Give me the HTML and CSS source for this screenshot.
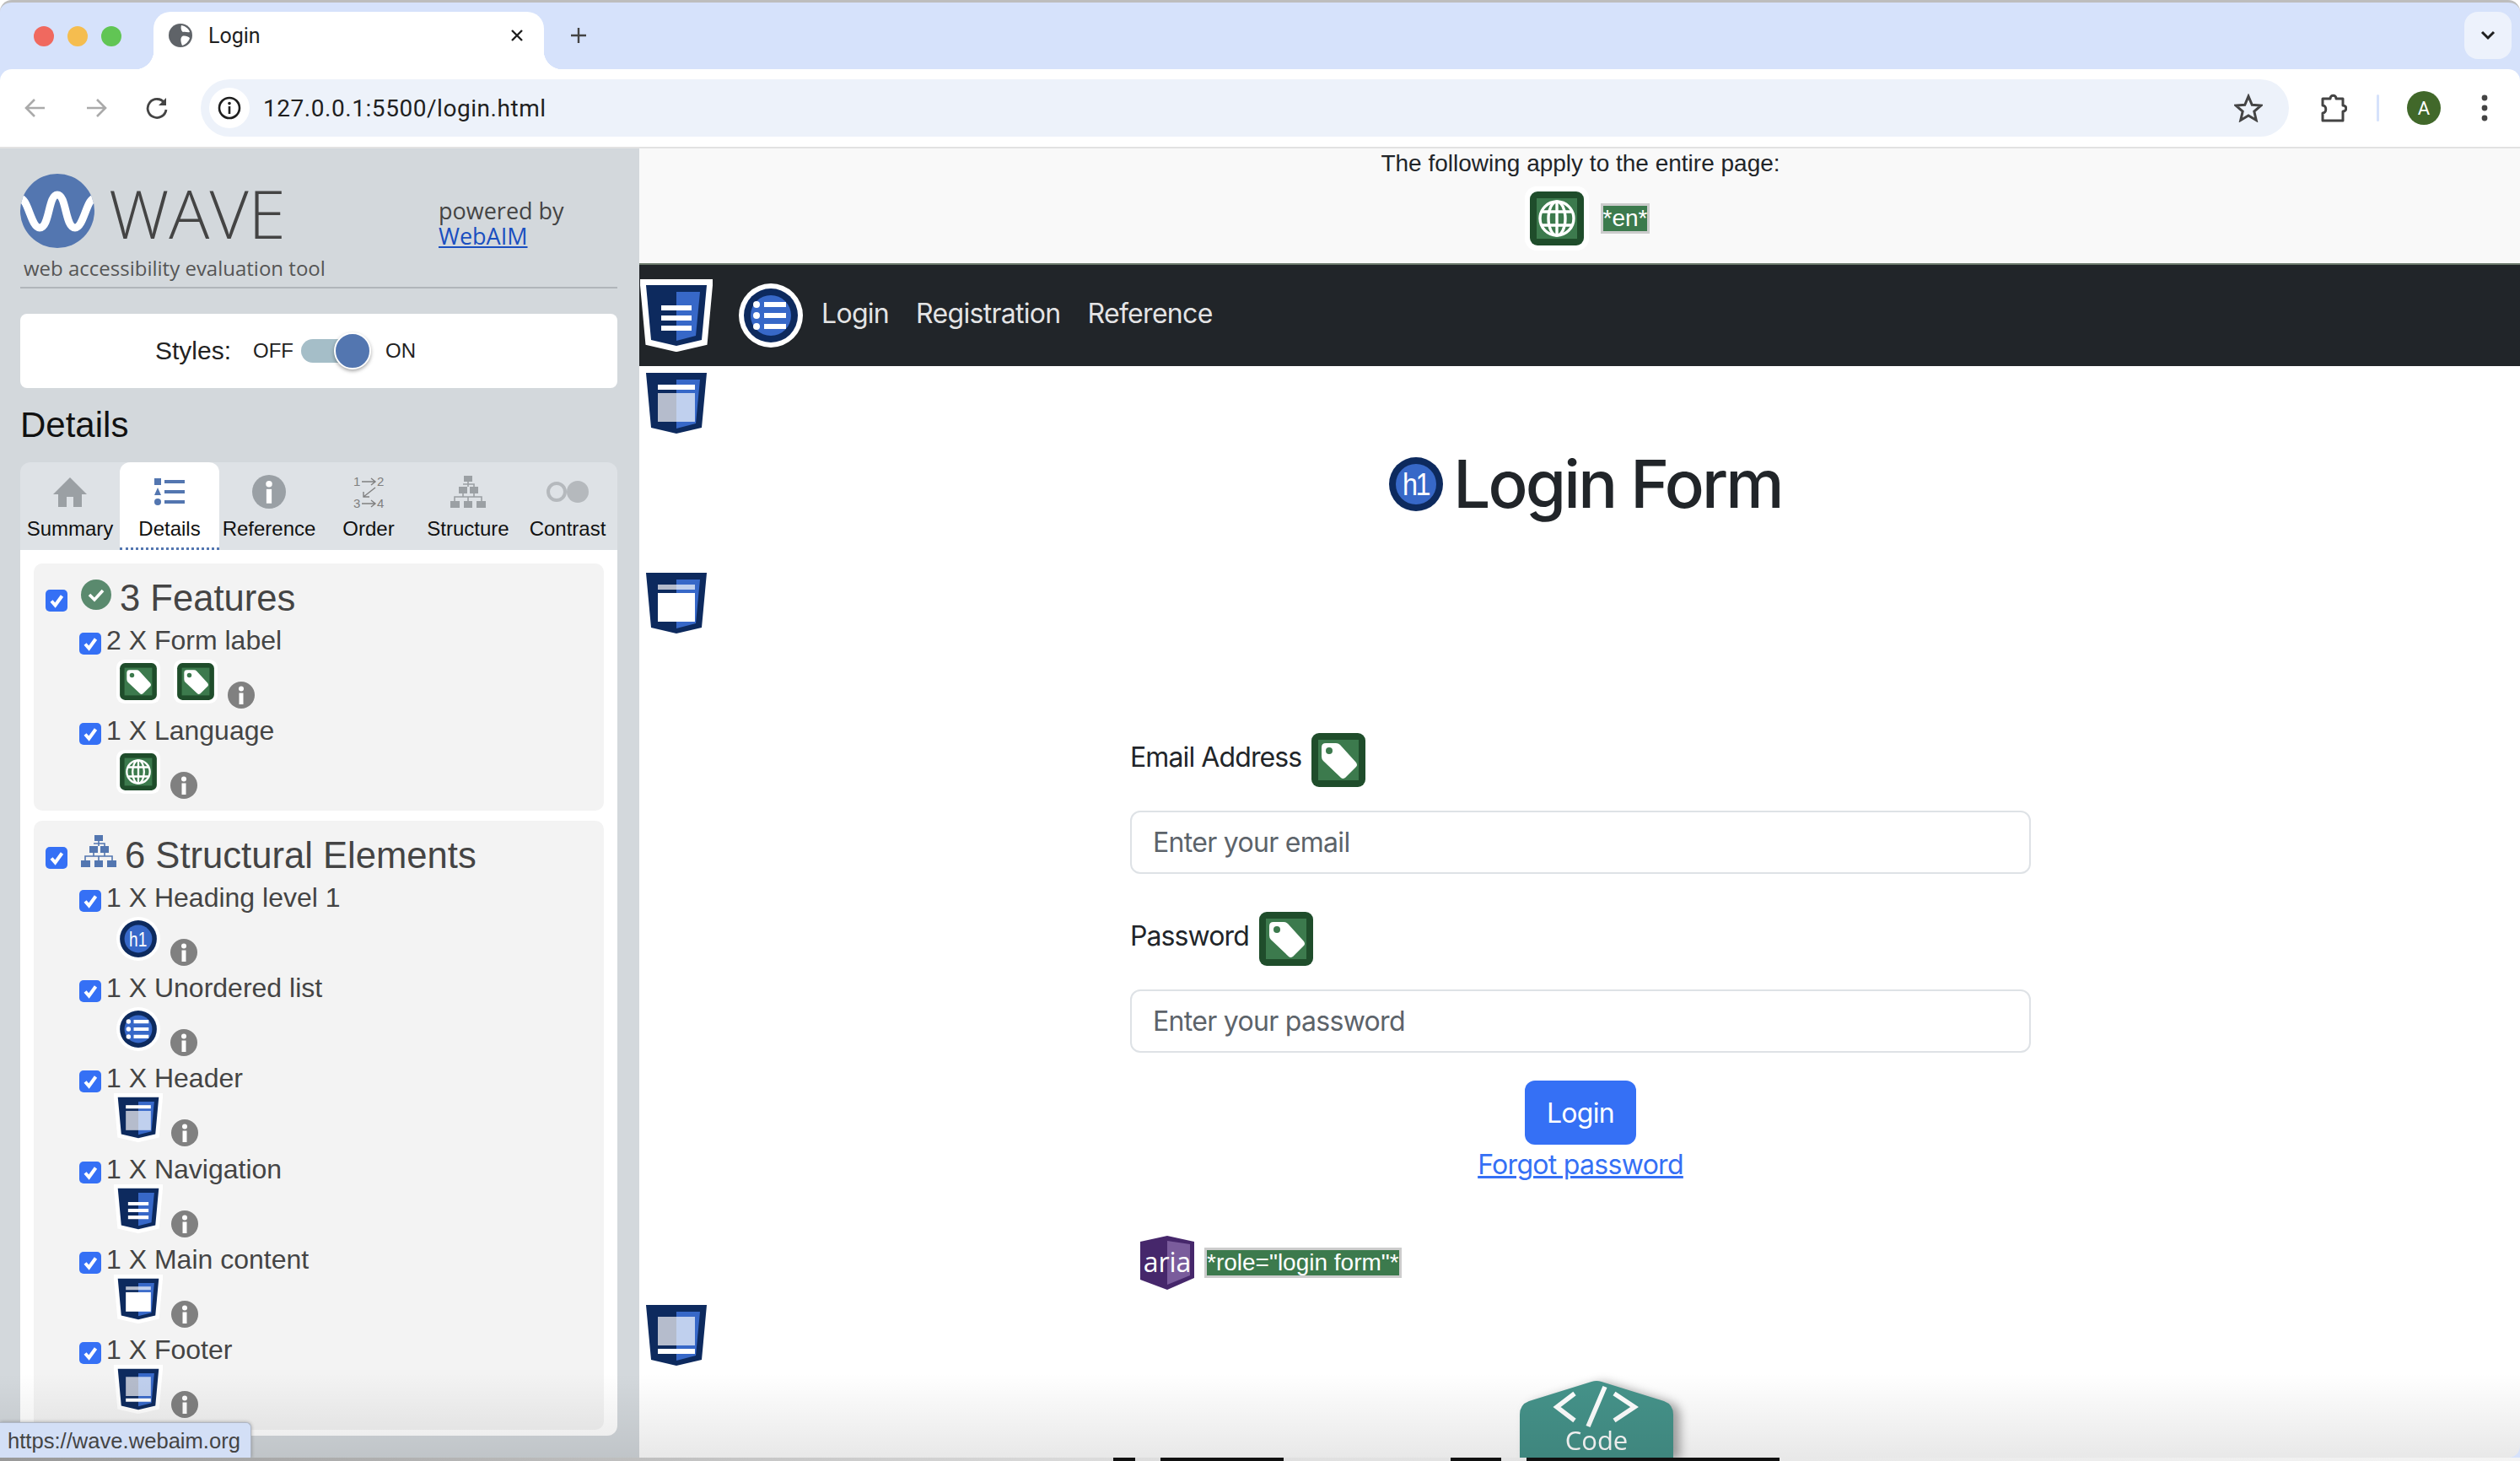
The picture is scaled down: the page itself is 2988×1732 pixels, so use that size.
FILE: index.html
```html
<!DOCTYPE html>
<html lang="en">
<head>
<meta charset="utf-8">
<title>Login</title>
<link rel="stylesheet" href="styles.css">
</head>
<body>
<svg class="defs" width="0" height="0" aria-hidden="true">
  <defs>
    <symbol id="shield-base" viewBox="-7 -7 86 86">
      <path d="M0 0H72L66 65L36 72L6 65Z" fill="#0d2a5e" stroke="#fff" stroke-width="14" paint-order="stroke"/>
      <path d="M36 8H64L59 60L36 66Z" fill="#3768c8"/>
    </symbol>
    <symbol id="s-nav" viewBox="-7 -7 86 86">
      <use href="#shield-base" x="-7" y="-7" width="86" height="86"/>
      <path d="M18 24h36v6H18zM18 36h36v6H18zM18 48h36v6H18z" fill="#fff"/>
    </symbol>
    <symbol id="s-header" viewBox="-7 -7 86 86">
      <use href="#shield-base" x="-7" y="-7" width="86" height="86"/>
      <path d="M14 14h44v6H14z" fill="#fff"/>
      <path d="M14 24h22v34H14z" fill="#b5bccc"/><path d="M36 24h22v34H36z" fill="#c0d0ee"/>
    </symbol>
    <symbol id="s-main" viewBox="-7 -7 86 86">
      <use href="#shield-base" x="-7" y="-7" width="86" height="86"/>
      <path d="M14 14h22v6H14z" fill="#b5bccc"/><path d="M36 14h22v6H36z" fill="#c0d0ee"/>
      <path d="M14 24h44v34H14z" fill="#fff"/>
    </symbol>
    <symbol id="s-footer" viewBox="-7 -7 86 86">
      <use href="#shield-base" x="-7" y="-7" width="86" height="86"/>
      <path d="M14 14h22v34H14z" fill="#b5bccc"/><path d="M36 14h22v34H36z" fill="#c0d0ee"/>
      <path d="M14 52h44v6H14z" fill="#fff"/>
    </symbol>
    <symbol id="i-tag" viewBox="-6 -6 76 76">
      <rect x="-6" y="-6" width="76" height="76" rx="14" fill="#fff"/>
      <rect width="64" height="64" rx="9" fill="#1f4d2b"/>
      <rect x="8" y="8" width="48" height="48" fill="#3c7a4d"/>
      <path d="M12 17q0-5 5-5H29q3 0 5 2L53 35q2 3 0 5L40 53q-3 2-5 0L14 33q-2-2-2-5Z" fill="#fff"/>
      <circle cx="21" cy="21" r="4" fill="#3c7a4d"/>
    </symbol>
    <symbol id="i-globe" viewBox="-6 -6 76 76">
      <rect x="-6" y="-6" width="76" height="76" rx="14" fill="#fff"/>
      <rect width="64" height="64" rx="9" fill="#1f4d2b"/>
      <rect x="8" y="8" width="48" height="48" fill="#3c7a4d"/>
      <g fill="none" stroke="#fff" stroke-width="3.4">
        <circle cx="32" cy="32" r="20"/>
        <ellipse cx="32" cy="32" rx="10" ry="20"/>
        <path d="M14 24H50M14 40H50M32 12V52"/>
      </g>
    </symbol>
    <symbol id="i-h1" viewBox="-6 -6 76 76">
      <circle cx="32" cy="32" r="38" fill="#fff"/>
      <circle cx="32" cy="32" r="32" fill="#0d2a5e"/>
      <circle cx="32" cy="32" r="24" fill="#3768c8"/>
      <text x="16" y="45" class="svg-h1" textLength="31" lengthAdjust="spacingAndGlyphs">h1</text>
    </symbol>
    <symbol id="i-ul" viewBox="-6 -6 76 76">
      <circle cx="32" cy="32" r="38" fill="#fff"/>
      <circle cx="32" cy="32" r="32" fill="#0d2a5e"/>
      <circle cx="32" cy="32" r="24" fill="#3768c8"/>
      <g fill="#fff">
        <circle cx="15" cy="19" r="4"/><circle cx="15" cy="32" r="4"/><circle cx="15" cy="45" r="4"/>
        <path d="M24 16H50V22H24zM24 29H50V35H24zM24 42H50V48H24z"/>
      </g>
    </symbol>
    <symbol id="i-info" viewBox="0 0 32 32">
      <circle cx="16" cy="16" r="16" fill="currentColor"/>
      <circle cx="16" cy="8.5" r="3" fill="#fff"/>
      <path d="M13.5 13.5H18.5V27H13.5Z" fill="#fff"/>
    </symbol>
    <symbol id="i-check" viewBox="0 0 26 26">
      <path d="M7 13.5L11.5 18.5L19.5 7.5" fill="none" stroke="#fff" stroke-width="4"/>
    </symbol>
    <symbol id="i-tree" viewBox="0 0 42 38">
      <path d="M16 0H26V7H16ZM10 13H20V21H10ZM23 13H33V21H23ZM0 30H11V38H0ZM16 30H26V38H16ZM31 30H42V38H31Z" fill="currentColor"/>
      <path d="M21 7V13M15 10H28V13M15 21V25H5V30M28 21V25H37V30M21 25V30M15 25H28" fill="none" stroke="currentColor" stroke-width="1.6"/>
    </symbol>
  </defs>
</svg>

<div class="window">
  <div class="tabstrip">
    <div class="lights">
      <span class="light light-red"></span>
      <span class="light light-yellow"></span>
      <span class="light light-green"></span>
    </div>
    <div class="tab">
      <svg class="tab-favicon" viewBox="0 0 28 28"><circle cx="14" cy="14" r="14" fill="#5f6368"/><path d="M15 2C20 3 24 6 25 10C22 11 20 9 17 10C15 9 14 5 15 2ZM16 15C19 14 23 15 25 17C24 21 20 25 16 26C15 23 13 18 16 15Z" fill="#fff"/></svg>
      <span class="tab-title">Login</span>
      <svg class="tab-close" viewBox="0 0 16 16"><path d="M2 2L14 14M14 2L2 14" stroke="#1f1f1f" stroke-width="2.4"/></svg>
    </div>
    <svg class="new-tab" viewBox="0 0 20 20"><path d="M10 1V19M1 10H19" stroke="#444" stroke-width="2.4"/></svg>
    <div class="tab-menu"><svg viewBox="0 0 18 12" class="tab-menu-icon"><path d="M2 2L9 9L16 2" fill="none" stroke="#1f1f1f" stroke-width="3"/></svg></div>
  </div>
  <div class="toolbar">
    <svg class="nav-btn" viewBox="0 0 28 28"><path d="M25 14H4M13 4L3 14L13 24" fill="none" stroke="#aaa" stroke-width="2.6"/></svg>
    <svg class="nav-btn" viewBox="0 0 28 28"><path d="M3 14H24M15 4L25 14L15 24" fill="none" stroke="#aaa" stroke-width="2.6"/></svg>
    <svg class="nav-btn" viewBox="0 0 28 28"><path d="M23 8A11 11 0 1 0 25 16" fill="none" stroke="#444" stroke-width="2.8"/><path d="M25 2V11H16Z" fill="#444"/></svg>
    <div class="omnibox">
      <span class="site-info"><svg class="site-info-icon" viewBox="0 0 28 28"><circle cx="14" cy="14" r="12" fill="none" stroke="#1f1f1f" stroke-width="2.6"/><circle cx="14" cy="8.6" r="1.8" fill="#1f1f1f"/><path d="M12.7 12H15.3V21H12.7Z" fill="#1f1f1f"/></svg></span>
      <span class="url">127.0.0.1:5500/login.html</span>
      <svg class="star" viewBox="0 0 32 32"><path d="M16 3L20 12.5L30 13.3L22.4 19.8L24.7 29.6L16 24.4L7.3 29.6L9.6 19.8L2 13.3L12 12.5Z" fill="none" stroke="#444" stroke-width="2.8"/></svg>
    </div>
    <svg class="ext" viewBox="0 0 32 36"><path d="M3 7H12C12 2 19 2 19 7H27V15C32 15 32 22 27 22V33H3V24C8 24 8 15 3 15Z" fill="none" stroke="#444" stroke-width="3" stroke-linejoin="round"/></svg>
    <span class="tool-divider"></span>
    <span class="avatar">A</span>
    <svg class="dots" viewBox="0 0 8 32"><circle cx="4" cy="4" r="3.4" fill="#444"/><circle cx="4" cy="16" r="3.4" fill="#444"/><circle cx="4" cy="28" r="3.4" fill="#444"/></svg>
  </div>

  <div class="content">
    <aside class="sidebar">
      <div class="brand">
        <div class="brand-top">
          <svg class="logo" viewBox="0 0 88 88"><defs><clipPath id="logo-clip"><circle cx="44" cy="44" r="44"/></clipPath></defs><circle cx="44" cy="44" r="44" fill="#5376b0"/><path clip-path="url(#logo-clip)" d="M-2 30C9 24 12 64 23 64C35 64 33 25 44 25C55 25 53 64 65 64C76 64 79 24 90 30" fill="none" stroke="#fff" stroke-width="9"/></svg>
          <span class="wave">WAVE</span>
          <div class="powered">powered by<br><a class="webaim" href="#">WebAIM</a></div>
        </div>
        <div class="tagline">web accessibility evaluation tool</div>
      </div>

      <div class="styles-card">
        <span class="styles-label">Styles:</span>
        <span class="styles-state">OFF</span>
        <span class="toggle"><span class="knob"></span></span>
        <span class="styles-state">ON</span>
      </div>

      <h2 class="details-title">Details</h2>

      <div class="tabs">
        <div class="wtab">
          <span class="wtab-icon"><svg class="ic-home" viewBox="0 0 40 35"><path d="M20 0L40 20H34V35H24V23H16V35H6V20H0Z" fill="#9ba0a4"/></svg></span>
          <span class="wtab-label">Summary</span>
        </div>
        <div class="wtab wtab-active">
          <span class="wtab-icon"><svg class="ic-details" viewBox="0 0 36 32"><path d="M0 0H8V8H0ZM4 11L8 20H0ZM12 2H36V6H12ZM12 14H36V18H12ZM12 26H36V30H12Z" fill="#5376b0"/><circle cx="4" cy="28" r="4" fill="#5376b0"/></svg></span>
          <span class="wtab-label">Details</span>
        </div>
        <div class="wtab">
          <span class="wtab-icon"><svg class="ic-ref"><use href="#i-info"/></svg></span>
          <span class="wtab-label">Reference</span>
        </div>
        <div class="wtab">
          <span class="wtab-icon"><svg class="ic-order" viewBox="0 0 37 40"><text x="0" y="13" class="svg-order">1</text><text x="28" y="13" class="svg-order">2</text><text x="0" y="39" class="svg-order">3</text><text x="28" y="39" class="svg-order">4</text><path d="M10 8H25M21 4L26 8L21 12M10 34H25M21 30L26 34L21 38M26 15L12 26M12 20V26H19" fill="none" stroke="#808080" stroke-width="1.4"/></svg></span>
          <span class="wtab-label">Order</span>
        </div>
        <div class="wtab">
          <span class="wtab-icon"><svg class="ic-tree"><use href="#i-tree"/></svg></span>
          <span class="wtab-label">Structure</span>
        </div>
        <div class="wtab">
          <span class="wtab-icon"><svg class="ic-contrast" viewBox="0 0 50 26"><circle cx="12" cy="13" r="10" fill="none" stroke="#b5b9bd" stroke-width="4"/><circle cx="37" cy="13" r="13" fill="#b5b9bd"/></svg></span>
          <span class="wtab-label">Contrast</span>
        </div>
      </div>

      <div class="panel">
        <section class="group group-features">
          <div class="group-head">
            <span class="cb"><svg class="cb-check"><use href="#i-check"/></svg></span>
            <svg class="group-icon" viewBox="0 0 36 36"><circle cx="18" cy="18" r="18" fill="#5a8a6e"/><path d="M10 18L16 24L26 13" fill="none" stroke="#fff" stroke-width="3.6"/></svg>
            <h3 class="group-title">3 Features</h3>
          </div>
          <div class="row">
            <div class="row-head"><span class="cb"><svg class="cb-check"><use href="#i-check"/></svg></span><span class="row-label">2 X Form label</span></div>
            <div class="row-icons"><svg class="ic"><use href="#i-tag"/></svg><svg class="ic"><use href="#i-tag"/></svg><svg class="ic-more"><use href="#i-info"/></svg></div>
          </div>
          <div class="row">
            <div class="row-head"><span class="cb"><svg class="cb-check"><use href="#i-check"/></svg></span><span class="row-label">1 X Language</span></div>
            <div class="row-icons"><svg class="ic"><use href="#i-globe"/></svg><svg class="ic-more"><use href="#i-info"/></svg></div>
          </div>
        </section>

        <section class="group">
          <div class="group-head">
            <span class="cb"><svg class="cb-check"><use href="#i-check"/></svg></span>
            <svg class="group-tree"><use href="#i-tree"/></svg>
            <h3 class="group-title">6 Structural Elements</h3>
          </div>
          <div class="row">
            <div class="row-head"><span class="cb"><svg class="cb-check"><use href="#i-check"/></svg></span><span class="row-label">1 X Heading level 1</span></div>
            <div class="row-icons"><svg class="ic"><use href="#i-h1"/></svg><svg class="ic-more"><use href="#i-info"/></svg></div>
          </div>
          <div class="row">
            <div class="row-head"><span class="cb"><svg class="cb-check"><use href="#i-check"/></svg></span><span class="row-label">1 X Unordered list</span></div>
            <div class="row-icons"><svg class="ic"><use href="#i-ul"/></svg><svg class="ic-more"><use href="#i-info"/></svg></div>
          </div>
          <div class="row">
            <div class="row-head"><span class="cb"><svg class="cb-check"><use href="#i-check"/></svg></span><span class="row-label">1 X Header</span></div>
            <div class="row-icons"><svg class="ic-shield"><use href="#s-header"/></svg><svg class="ic-more"><use href="#i-info"/></svg></div>
          </div>
          <div class="row">
            <div class="row-head"><span class="cb"><svg class="cb-check"><use href="#i-check"/></svg></span><span class="row-label">1 X Navigation</span></div>
            <div class="row-icons"><svg class="ic-shield"><use href="#s-nav"/></svg><svg class="ic-more"><use href="#i-info"/></svg></div>
          </div>
          <div class="row">
            <div class="row-head"><span class="cb"><svg class="cb-check"><use href="#i-check"/></svg></span><span class="row-label">1 X Main content</span></div>
            <div class="row-icons"><svg class="ic-shield"><use href="#s-main"/></svg><svg class="ic-more"><use href="#i-info"/></svg></div>
          </div>
          <div class="row">
            <div class="row-head"><span class="cb"><svg class="cb-check"><use href="#i-check"/></svg></span><span class="row-label">1 X Footer</span></div>
            <div class="row-icons"><svg class="ic-shield"><use href="#s-footer"/></svg><svg class="ic-more"><use href="#i-info"/></svg></div>
          </div>
        </section>
      </div>
    </aside>

    <main class="page">
      <div class="page-info">
        <p class="page-info-text">The following apply to the entire page:</p>
        <div class="page-info-icons">
          <svg class="big-ic"><use href="#i-globe"/></svg>
          <span class="code-label">*en*</span>
        </div>
      </div>
      <nav class="navbar">
        <svg class="big-shield"><use href="#s-nav"/></svg>
        <svg class="big-ic navbar-ul"><use href="#i-ul"/></svg>
        <a class="nav-link" href="#">Login</a>
        <a class="nav-link" href="#">Registration</a>
        <a class="nav-link" href="#">Reference</a>
      </nav>

      <svg class="big-shield float-shield float-header"><use href="#s-header"/></svg>
      <svg class="big-shield float-shield float-main"><use href="#s-main"/></svg>
      <svg class="big-shield float-shield float-footer"><use href="#s-footer"/></svg>

      <h1 class="hero"><svg class="big-ic"><use href="#i-h1"/></svg><span>Login Form</span></h1>

      <form class="form">
        <div class="form-label"><label for="email">Email Address</label><svg class="big-ic"><use href="#i-tag"/></svg></div>
        <input class="form-input" id="email" type="email" placeholder="Enter your email">
        <div class="form-label form-label-2"><label for="password">Password</label><svg class="big-ic"><use href="#i-tag"/></svg></div>
        <input class="form-input" id="password" type="password" placeholder="Enter your password">
        <div class="form-actions">
          <button class="login-btn" type="button">Login</button>
          <a class="forgot" href="#">Forgot password</a>
        </div>
        <div class="aria-row">
          <svg class="aria-ic" viewBox="0 0 64 64"><path d="M0 7L32 0L64 7V50L32 64L0 52Z" fill="#46276b"/><path d="M32 6L59 10V47L32 58Z" fill="#7a5c9c"/><text x="32" y="43" class="svg-aria">aria</text></svg>
          <span class="code-label">*role="login form"*</span>
        </div>
      </form>

      <svg class="code-tab" viewBox="0 0 182 91"><path d="M0 91V40Q0 28 11 24L85 1Q91-1 97 1L171 24Q182 28 182 40V91Z" fill="#45938a"/><path d="M65 15L44 31L65 47M112 15L136 31L112 47M101 7L81 54" fill="none" stroke="#fff" stroke-width="5.5"/><text x="91" y="82" class="svg-code">Code</text></svg>
    </main>

    <div class="bottom-fade"></div>
    <div class="status">https://wave.webaim.org</div>
  </div>

  <div class="under-strip">
    <span class="scrap scrap-a"></span><span class="scrap scrap-b"></span><span class="scrap scrap-c"></span><span class="scrap scrap-d"></span>
  </div>
</div>
</body>
</html>
```

FILE: styles.css
```css
* { box-sizing: border-box; }
html, body { margin: 0; padding: 0; background: #fff; }
.defs { position: absolute; }
.svg-h1 { font: 36px "Liberation Sans", sans-serif; fill: #fff; }
.svg-order { font: 15px "Liberation Sans", sans-serif; fill: #808080; }
.svg-aria { font: 32px "Open Sans", sans-serif; fill: #fff; text-anchor: middle; }
.svg-code { font: 31px "Open Sans", sans-serif; fill: #fff; text-anchor: middle; }

.window { width: 2988px; height: 1732px; overflow: hidden; display: flex; flex-direction: column; background: #d6e2fb; border-radius: 14px 14px 0 0; border-top: 3px solid #bdbdbd; }

/* browser chrome */
.tabstrip { height: 79px; flex: none; display: flex; align-items: center; padding-left: 40px; font-family: Roboto, sans-serif; }
.lights { display: flex; gap: 16px; }
.light { width: 24px; height: 24px; border-radius: 50%; }
.light-red { background: #f0695f; }
.light-yellow { background: #f5bd4f; }
.light-green { background: #61c554; }
.tab { position: relative; align-self: flex-end; margin-left: 38px; width: 463px; height: 68px; background: #fff; border-radius: 20px 20px 0 0; display: flex; align-items: center; padding: 0 24px 12px 18px; }
.tab::before, .tab::after { content: ""; position: absolute; bottom: 0; width: 22px; height: 22px; }
.tab::before { left: -22px; background: radial-gradient(circle at 0 0, transparent 22px, #fff 22.5px); }
.tab::after { right: -22px; background: radial-gradient(circle at 100% 0, transparent 22px, #fff 22.5px); }
.tab-favicon { width: 28px; height: 28px; }
.tab-title { margin-left: 19px; font-size: 25px; color: #1f1f1f; }
.tab-close { width: 16px; height: 16px; margin-left: auto; }
.new-tab { width: 20px; height: 20px; margin-left: 31px; margin-top: -2px; }
.tab-menu { margin-left: auto; margin-right: 10px; width: 56px; height: 56px; margin-top: -2px; border-radius: 16px; background: #edf2fc; display: flex; align-items: center; justify-content: center; }
.tab-menu-icon { width: 18px; height: 12px; }

.toolbar { height: 92px; flex: none; background: #fff; border-radius: 14px 14px 0 0; display: flex; align-items: center; padding: 0 38px 0 28px; }
.nav-btn { width: 28px; height: 28px; margin-right: 44px; }
.omnibox { flex: 1; height: 68px; margin-left: -6px; background: #edf2fa; border-radius: 34px; display: flex; align-items: center; padding: 0 31px 0 10px; }
.site-info { width: 48px; height: 48px; border-radius: 50%; background: #fff; display: flex; align-items: center; justify-content: center; }
.site-info-icon { width: 28px; height: 28px; }
.url { margin-left: 16px; font: 28px Roboto, sans-serif; letter-spacing: .55px; color: #1f1f1f; }
.star { width: 34px; height: 34px; margin-left: auto; }
.ext { width: 32px; height: 36px; margin-left: 37px; margin-right: -2px; }
.tool-divider { width: 3px; height: 32px; margin-left: 37px; background: #d6e2fb; border-radius: 2px; }
.avatar { width: 40px; height: 40px; margin-left: 33px; border-radius: 50%; background: #41682a; color: #fff; font: 22px Roboto, sans-serif; display: flex; align-items: center; justify-content: center; }
.dots { width: 8px; height: 32px; margin-left: 48px; }

.content { position: relative; flex: 1; min-height: 0; display: flex; border-top: 2px solid #e2e2e2; background: #fff; overflow: hidden; border-radius: 0 0 14px 0; }

/* WAVE sidebar */
.sidebar { width: 758px; flex: none; background: #d3d8dc; padding: 0 26px 0 24px; font-family: "Liberation Sans", sans-serif; }
.brand { height: 166px; border-bottom: 2px solid #b0b5ba; font-family: "Open Sans", sans-serif; }
.brand-top { display: flex; align-items: flex-start; padding-top: 30px; height: 125px; }
.logo { width: 88px; height: 88px; flex: none; }
.wave { margin: 2px 0 0 17px; width: 391px; font-size: 80px; line-height: 88px; font-weight: 300; color: #444; }
.powered { margin-top: 29px; font-size: 27px; line-height: 30px; color: #444; }
.webaim { color: #1a4fc0; }
.tagline { margin: 0 0 0 4px; font-size: 24px; line-height: 34px; color: #555; }

.styles-card { margin-top: 30px; height: 88px; background: #fff; border-radius: 8px; display: flex; align-items: center; padding-left: 160px; color: #222; }
.styles-label { font-size: 30px; margin-right: 26px; }
.styles-state { font-size: 24px; }
.toggle { position: relative; width: 74px; height: 28px; margin: 0 26px 0 9px; background: #a5bec8; border-radius: 14px; }
.knob { position: absolute; right: -9px; top: -8px; width: 44px; height: 44px; background: #5376b0; border: 2px solid #fff; border-radius: 50%; box-shadow: 0 2px 4px rgba(0,0,0,.35); }

.details-title { margin: 0; height: 88px; font-size: 42px; font-weight: 400; line-height: 88px; color: #111; }

.tabs { height: 104px; display: flex; background: #dee2e6; border-radius: 12px 12px 0 0; }
.wtab { flex: 1; display: flex; flex-direction: column; align-items: center; padding-top: 13px; font-size: 24px; color: #111; border-radius: 12px 12px 0 0; }
.wtab-active { background: #fff; border-bottom: 3px dotted #5376b0; }
.wtab-icon { height: 44px; display: flex; align-items: center; justify-content: center; }
.wtab-label { margin-top: 8px; line-height: 28px; white-space: nowrap; }
.ic-home { width: 40px; height: 35px; }
.ic-details { width: 36px; height: 32px; }
.ic-ref { width: 40px; height: 40px; color: #9aa0a5; }
.ic-order { width: 37px; height: 40px; }
.ic-tree { width: 42px; height: 38px; color: #9ba0a4; }
.ic-contrast { width: 50px; height: 26px; }

.panel { height: 1050px; padding: 16px 16px 7px; background: #fff; border-radius: 0 0 12px 12px; display: flex; flex-direction: column; gap: 12px; }
.group { flex: none; background: #f3f3f3; border-radius: 10px; padding: 0 14px; color: #444; height: 722px; overflow: hidden; }
.group-features { height: 293px; }
.group-head { display: flex; align-items: flex-start; height: 71px; }
.group-head .cb { margin-top: 31px; }
.group-icon { width: 36px; height: 36px; margin: 19px 0 0 16px; flex: none; }
.group-tree { width: 42px; height: 38px; margin: 17px 0 0 16px; flex: none; color: #5376b0; }
.group-title { margin: 16px 0 0 10px; font-size: 43.6px; font-weight: 400; line-height: 50px; white-space: nowrap; }
.cb { width: 26px; height: 26px; flex: none; background: #3570f5; border-radius: 5px; display: block; }
.cb-check { width: 26px; height: 26px; display: block; }

.row { height: 107.2px; padding-left: 40px; }
.row-head { display: flex; align-items: flex-start; height: 43px; }
.row-head .cb { margin-top: 11px; }
.row-label { margin: 2px 0 0 6px; font-size: 32px; line-height: 36px; white-space: nowrap; }
.row-icons { display: flex; align-items: flex-start; gap: 16px; padding-left: 44px; }
.ic { width: 52px; height: 52px; flex: none; }
.ic-shield { width: 58px; height: 58px; margin: -5px -2px 0 -3px; flex: none; }
.ic-more { width: 32px; height: 32px; margin: 26px 0 0 -4px; flex: none; color: #808080; }

/* page being evaluated */
.page { position: relative; flex: 1; min-width: 0; font-family: Inter, sans-serif; color: #212529; }
.page-info { height: 136px; background: #f9f9f9; text-align: center; padding-left: 2px; }
.page-info-text { margin: 0; padding-top: 2px; font: 28px/32px "Liberation Sans", sans-serif; }
.page-info-icons { display: flex; justify-content: center; align-items: center; gap: 14px; margin-top: 11px; padding-left: 16px; }
.big-ic { width: 76px; height: 76px; flex: none; }
.code-label { background: #3c7a4d; border: 3px solid #ccc; color: #fff; font: 28px/30px "Liberation Sans", sans-serif; padding: 0; white-space: nowrap; }

.navbar { height: 122px; background: #212529; border-top: 2px solid #6c7a6c; display: flex; align-items: center; padding-left: 1px; }
.big-shield { width: 86px; height: 86px; flex: none; }
.navbar-ul { margin-left: 31px; margin-right: 22px; }
.nav-link { color: rgba(255,255,255,.9); font-size: 32px; letter-spacing: -.7px; line-height: 40px; padding-bottom: 4px; text-decoration: none; margin-right: 32px; }
.float-shield { position: absolute; left: 1px; }
.float-header { top: 259px; }
.float-main { top: 496px; }
.float-footer { top: 1364px; }

.hero { margin: 92px 0 0; height: 96px; padding-left: 8px; display: flex; justify-content: center; align-items: center; gap: 6px; font-size: 78px; font-weight: 500; letter-spacing: -2.8px; line-height: 96px; }

.form { width: 1068px; margin: 241px 0 0 582px; letter-spacing: -.7px; }
.form-label { display: flex; align-items: center; height: 76px; gap: 6px; font-size: 32px; letter-spacing: -.9px; }
.form-label label { line-height: 40px; margin-top: -6px; }
.form-label-2 { margin-top: 39px; }
.form-input { display: block; width: 100%; height: 75px; margin-top: 22px; padding: 0 25px; background: #fff; border: 2px solid #dee2e6; border-radius: 12px; font: 32px Inter, sans-serif; letter-spacing: -.7px; color: #212529; outline: none; }
.form-input::placeholder { color: #5c636a; }
.form-actions { display: flex; flex-direction: column; align-items: center; margin-top: 33px; }
.login-btn { width: 132px; height: 76px; background: #3570f5; border: 0; border-radius: 12px; color: #fff; font: 32px Inter, sans-serif; letter-spacing: -.7px; }
.forgot { margin-top: 6px; color: #3570f5; font-size: 32px; line-height: 36px; text-decoration: underline; }
.aria-row { display: flex; align-items: center; gap: 12px; margin-top: 66px; padding-left: 12px; letter-spacing: 0; }
.aria-ic { width: 64px; height: 64px; flex: none; }

.code-tab { position: absolute; left: 1044px; bottom: 0; width: 182px; height: 91px; filter: drop-shadow(8px 2px 6px rgba(0,0,0,.35)); }

.bottom-fade { position: absolute; left: 0; right: 0; bottom: 0; height: 100px; background: linear-gradient(rgba(0,0,0,0), rgba(0,0,0,.09)); pointer-events: none; }
.status { position: absolute; left: 0; bottom: 0; width: 298px; height: 42px; padding-left: 9px; background: #d3dff6; border: 1px solid #aeb6c4; border-left: 0; border-bottom: 0; border-radius: 0 6px 0 0; font: 25.6px/42px "Liberation Sans", sans-serif; color: #444; white-space: nowrap; box-shadow: 0 0 4px rgba(0,0,0,.3); }

.under-strip { position: relative; height: 4px; flex: none; background: linear-gradient(to right, #999, #ddd 45%, #f4f4f4); }
.scrap { position: absolute; top: 0; height: 4px; background: #111; }
.scrap-a { left: 1320px; width: 26px; }
.scrap-b { left: 1376px; width: 146px; }
.scrap-c { left: 1720px; width: 60px; }
.scrap-d { left: 1810px; width: 300px; }
```
